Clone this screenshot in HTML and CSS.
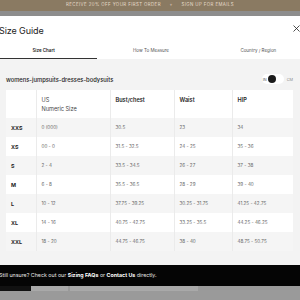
FILE: index.html
```html
<!DOCTYPE html>
<html>
<head>
    <title>Size Guide</title>
    <link rel="stylesheet" href="styles.css">
</head>
<body>
<div class="promo">RECEIVE 20% OFF YOUR FIRST ORDER <span class="plus">+</span> SIGN UP FOR EMAILS</div>
<div class="sitehead"><span class="logo">EVERLANE</span></div>

<div class="modal">
    <div class="modalhead">
        <h1>Size Guide</h1>
        <svg class="close" width="7" height="7" viewBox="0 0 7 7">
            <path d="M0.5 0.5 L6.5 6.5 M6.5 0.5 L0.5 6.5" stroke="#222" stroke-width="0.8" fill="none"/>
        </svg>
    </div>

    <div class="tabs">
        <div class="tab active">Size Chart</div>
        <div class="tab">How To Measure</div>
        <div class="tab">Country / Region</div>
    </div>

    <div class="chart">
        <div class="charttop">
            <span class="category">womens-jumpsuits-dresses-bodysuits</span>
            <div class="units">
                <span class="switch"><span class="unit">IN</span><span class="knob"></span></span>
                <span class="unit">CM</span>
            </div>
        </div>

        <table class="sizes">
            <colgroup>
                <col class="c-size"><col class="c-us"><col class="c-bust"><col class="c-waist"><col class="c-hip">
            </colgroup>
            <tr class="headrow">
                <th></th>
                <th class="light">US<br>Numeric Size</th>
                <th>Bust/chest</th>
                <th>Waist</th>
                <th>HIP</th>
            </tr>
            <tr class="odd"><td class="label">XXS</td><td>0 (000)</td><td>30.5</td><td>23</td><td>34</td></tr>
            <tr><td class="label">XS</td><td>00 - 0</td><td>31.5 - 32.5</td><td>24 - 25</td><td>35 - 36</td></tr>
            <tr class="odd"><td class="label">S</td><td>2 - 4</td><td>33.5 - 34.5</td><td>26 - 27</td><td>37 - 38</td></tr>
            <tr><td class="label">M</td><td>6 - 8</td><td>35.5 - 36.5</td><td>28 - 29</td><td>39 - 40</td></tr>
            <tr class="odd"><td class="label">L</td><td>10 - 12</td><td>37.75 - 39.25</td><td>30.25 - 31.75</td><td>41.25 - 42.75</td></tr>
            <tr><td class="label">XL</td><td>14 - 16</td><td>40.75 - 42.75</td><td>33.25 - 35.5</td><td>44.25 - 46.25</td></tr>
            <tr class="odd"><td class="label">XXL</td><td>18 - 20</td><td>44.75 - 46.75</td><td>38 - 40</td><td>48.75 - 50.75</td></tr>
        </table>
    </div>

    <div class="help">Still unsure? Check out our <b>Sizing FAQs</b> or <b>Contact Us</b> directly.</div>
</div>

<div class="pagestrip">
    <span class="blk dark"></span>
    <span class="blk pale short"></span>
    <span class="blk pale long"></span>
</div>
</body>
</html>
```

FILE: styles.css
```css
html, body
{
    margin: 0;
    padding: 0;
}
body
{
    width: 300px;
    height: 300px;
    overflow: hidden;
    background: #9a9a9a;
    font-family: "Inter", "Liberation Sans", sans-serif;
    color: #222;
}

/* ===== page behind the overlay ===== */
.promo
{
    height: 11px;
    line-height: 10px;
    background: #8a7a62;
    color: #e6dccb;
    font-size: 4.4px;
    letter-spacing: 0.4px;
    text-align: center;
}
.plus
{
    margin: 0 7px;
}
.sitehead
{
    height: 5px;
    overflow: hidden;
    background: #8d8d8d;
    text-align: center;
}
.logo
{
    display: inline-block;
    margin-top: 1px;
    font-size: 9px;
    line-height: 9px;
    letter-spacing: 3px;
    color: #3a3a3a;
}

/* ===== modal ===== */
.modal
{
    margin-left: -10px;
    width: 322px;
    background: #fff;
}
.modalhead
{
    height: 28px;
    display: flex;
    align-items: center;
    justify-content: space-between;
    padding: 0 12px 0 9px;
}
.modalhead h1
{
    margin: 0;
    font-size: 9px;
    font-weight: 400;
    letter-spacing: -0.1px;
}
.close
{
    display: block;
    margin-top: -3px;
}

.tabs
{
    display: flex;
    height: 15px;
}
.tab
{
    flex: 1;
    box-sizing: border-box;
    text-align: center;
    font-size: 4.5px;
    line-height: 14px;
    color: #555;
    border-bottom: 1px solid transparent;
}
.tab.active
{
    color: #222;
    font-weight: 600;
    border-bottom-color: #333;
}

/* ===== chart ===== */
.chart
{
    background: #f3f3f3;
    padding: 14px 19px 14px 16px;
}
.charttop
{
    height: 12px;
    display: flex;
    align-items: center;
    justify-content: space-between;
    margin-bottom: 5px;
}
.category
{
    font-size: 5.8px;
    font-weight: 500;
    color: #222;
}
.units
{
    display: flex;
    align-items: center;
}
.switch
{
    position: relative;
    width: 22px;
    height: 10px;
    border-radius: 5px;
    background: #fff;
    display: flex;
    align-items: center;
    padding-left: 1px;
    box-sizing: border-box;
}
.knob
{
    position: absolute;
    left: 6px;
    top: 1px;
    width: 8px;
    height: 8px;
    border-radius: 50%;
    background: #1a1a1a;
}
.unit
{
    font-size: 3.8px;
    color: #888;
    margin-left: 3px;
}
.switch .unit
{
    margin-left: 0;
    color: #555;
}

.sizes
{
    width: 287px;
    border-collapse: collapse;
    table-layout: fixed;
    background: #fff;
}
.c-size { width: 30px; }
.c-us { width: 74px; }
.c-bust { width: 64px; }
.c-waist { width: 58px; }
.c-hip { width: 61px; }

.sizes th, .sizes td
{
    padding: 0 0 0 5px;
    text-align: left;
    border-right: 1px solid #ebebeb;
}
.sizes th:last-child, .sizes td:last-child
{
    border-right: 0;
}
.headrow th
{
    height: 28px;
    vertical-align: top;
    padding-top: 6px;
    box-sizing: border-box;
    font-size: 5.6px;
    line-height: 9px;
    font-weight: 600;
    color: #222;
}
.headrow th.light
{
    font-weight: 400;
    color: #444;
}
.sizes td
{
    height: 19px;
    font-size: 4.6px;
    color: #666;
}
.sizes td.label
{
    font-size: 5.4px;
    font-weight: 700;
    color: #222;
}
.odd td
{
    background: #f5f5f5;
}

/* ===== footer ===== */
.help
{
    height: 21px;
    line-height: 21px;
    background: #050505;
    color: #e8e8e8;
    font-size: 5.3px;
    padding-left: 9px;
}
.help b
{
    color: #fff;
    font-weight: 700;
}

.pagestrip
{
    display: flex;
    height: 5px;
}
.blk
{
    display: block;
    height: 5px;
}
.dark { width: 31px; background: #111; }
.pale { background: #a9a9a9; }
.short { width: 37px; }
.long { width: 128px; margin-left: 2px; }
```
